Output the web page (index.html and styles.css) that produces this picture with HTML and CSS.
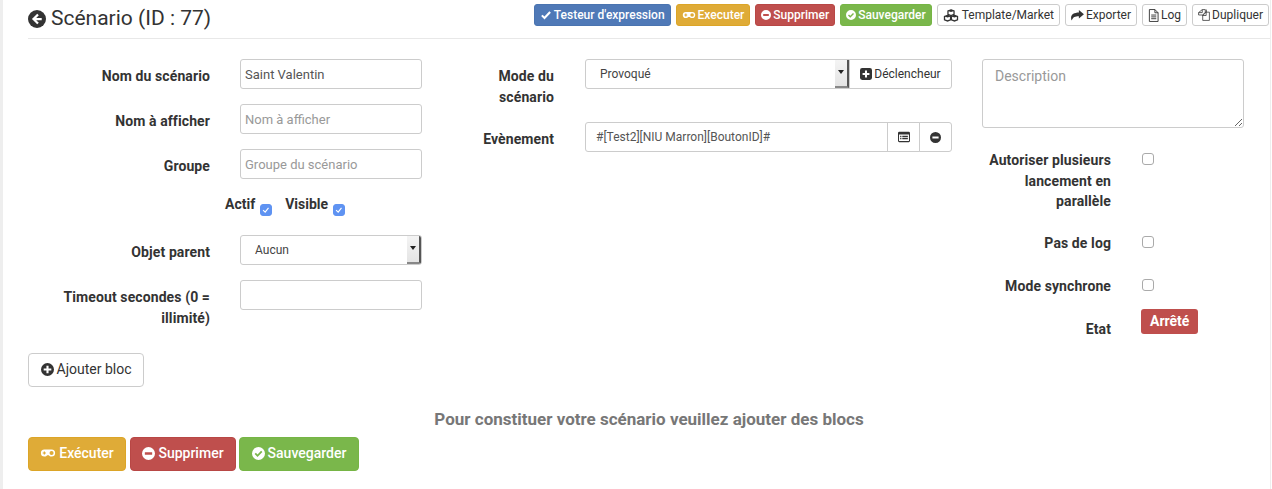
FILE: index.html
```html
<!DOCTYPE html>
<html lang="fr">
<head>
<meta charset="utf-8">
<title>Scénario</title>
<link rel="stylesheet" href="styles.css">
</head>
<body>
<svg class="defs" width="0" height="0" aria-hidden="true">
  <symbol id="i-back" viewBox="0 0 16 16"><circle cx="8" cy="8" r="8" fill="currentColor"/><path d="M8.200 3.300 3.500 8l4.700 4.700 1.400-1.400-2.300-2.300h4.900V7H7.300l2.300-2.300z" fill="#fff"/></symbol>
  <symbol id="i-check" viewBox="0 0 16 16"><path d="M2.500 8.500 6 12l7.500-8" fill="none" stroke="currentColor" stroke-width="2.800"/></symbol>
  <symbol id="i-game" viewBox="0 0 18 12"><path fill-rule="evenodd" d="M5 2h8a4 4 0 0 1 0 8c-1.500 0-2.500-.7-3-1.500H8C7.500 9.300 6.500 10 5 10A4 4 0 0 1 5 2zM4.200 4.200v1.100H3v1.400h1.200v1.100h1.400V6.700h1.100V5.300H5.600V4.200zM13 3.700a2.300 2.300 0 1 0 0 4.600 2.300 2.300 0 0 0 0-4.600z" fill="currentColor"/></symbol>
  <symbol id="i-minus" viewBox="0 0 16 16"><path fill-rule="evenodd" d="M8 0a8 8 0 1 1 0 16A8 8 0 0 1 8 0zM3.500 6.500v3h9v-3z" fill="currentColor"/></symbol>
  <symbol id="i-okc" viewBox="0 0 16 16"><path fill-rule="evenodd" d="M8 0a8 8 0 1 1 0 16A8 8 0 0 1 8 0zM6.800 12.300l6-6-1.600-1.600-4.400 4.400-2-2-1.600 1.600z" fill="currentColor"/></symbol>
  <symbol id="i-plus" viewBox="0 0 16 16"><path fill-rule="evenodd" d="M8 0a8 8 0 1 1 0 16A8 8 0 0 1 8 0zM6.700 3.300v3.400H3.300v2.600h3.400v3.400h2.600V9.300h3.400V6.700H9.300V3.300z" fill="currentColor"/></symbol>
  <symbol id="i-plussq" viewBox="0 0 14 14"><path fill-rule="evenodd" d="M2.500 0h9A2.500 2.500 0 0 1 14 2.500v9a2.500 2.500 0 0 1-2.500 2.500h-9A2.500 2.500 0 0 1 0 11.500v-9A2.500 2.500 0 0 1 2.500 0zM5.800 3v2.800H3v2.400h2.800V11h2.400V8.200H11V5.800H8.200V3z" fill="currentColor"/></symbol>
  <symbol id="i-cubes" viewBox="0 0 18 15"><g fill="none" stroke="currentColor" stroke-width="1.500"><path d="m9 1 3.500 1.300v3.900L9 7.500 5.500 6.200V2.300z"/><path d="m5 7.300 3.500 1.300v3.900L5 13.800l-3.500-1.300V8.600z"/><path d="m13 7.300 3.500 1.300v3.900L13 13.800l-3.500-1.300V8.600z"/></g><path d="m5.500 2.300 3.500 1.300 3.500-1.300L9 1zM1.500 8.600 5 9.900l3.500-1.300L5 7.300zM9.500 8.600l3.500 1.300 3.500-1.300L13 7.300z" fill="currentColor"/></symbol>
  <symbol id="i-share" viewBox="0 0 14 12"><path d="M8.500 0 14 4.700 8.500 9.400V6.700C4.500 6.700 2 7.400.6 11.500.2 10.500 0 9.500 0 8.500 0 4.800 3.600 2.900 8.500 2.800z" fill="currentColor"/></symbol>
  <symbol id="i-file" viewBox="0 0 12 14"><path d="M1.500.5h6l3.500 3.500v9.500H1.500zM7.500.5V4H11M3.500 6.500h5.500M3.500 8.500h5.500M3.500 10.500h5.500" fill="none" stroke="currentColor"/></symbol>
  <symbol id="i-copy" viewBox="0 0 14 14"><path d="M5 .7h3.500v3L5.500 7H.7V4.200zM5 .7v3.500H.7M8.500 3.700h1.300V.7M9.500 3.700H13.300V13.300H5.500V7M9.500 3.700 5.500 7.600h4z" fill="none" stroke="currentColor" stroke-width=".9"/></symbol>
  <symbol id="i-list" viewBox="0 0 14 12"><path fill-rule="evenodd" d="M1.500 0h11A1.500 1.500 0 0 1 14 1.500v9a1.500 1.500 0 0 1-1.500 1.500h-11A1.500 1.500 0 0 1 0 10.500v-9A1.500 1.500 0 0 1 1.500 0zM1.200 3.200v7.200c0 .2.200.4.400.4h10.800c.2 0 .4-.2.400-.4V3.200zM2.500 4.500V6H4V4.500zM5 4.500V6h6.500V4.500zM2.500 7V8.500H4V7zM5 7v1.500h6.500V7z" fill="currentColor"/></symbol>
</svg>

<main class="page">
  <header class="topbar">
    <h1 class="title"><svg class="ico ico-title"><use href="#i-back"/></svg>Scénario (ID : 77)</h1>
    <nav class="actions">
      <a class="btn btn-xs blue"><svg class="ico ico-check"><use href="#i-check"/></svg>Testeur d'expression</a>
      <a class="btn btn-xs amber"><svg class="ico ico-game"><use href="#i-game"/></svg>Executer</a>
      <a class="btn btn-xs red"><svg class="ico"><use href="#i-minus"/></svg>Supprimer</a>
      <a class="btn btn-xs green"><svg class="ico"><use href="#i-okc"/></svg>Sauvegarder</a>
      <a class="btn btn-xs plain"><svg class="ico ico-cubes"><use href="#i-cubes"/></svg>Template/Market</a>
      <a class="btn btn-xs plain"><svg class="ico ico-share"><use href="#i-share"/></svg>Exporter</a>
      <a class="btn btn-xs plain"><svg class="ico ico-file"><use href="#i-file"/></svg>Log</a>
      <a class="btn btn-xs plain"><svg class="ico ico-copy"><use href="#i-copy"/></svg>Dupliquer</a>
    </nav>
  </header>

  <section class="form">
    <div class="col col-left">
      <div class="row"><label class="lbl">Nom du scénario</label><input class="field" value="Saint Valentin"></div>
      <div class="row"><label class="lbl">Nom à afficher</label><input class="field" placeholder="Nom à afficher"></div>
      <div class="row"><label class="lbl">Groupe</label><input class="field" placeholder="Groupe du scénario"></div>
      <div class="flags">
        <label class="flag">Actif<input type="checkbox" class="check" checked></label>
        <label class="flag">Visible<input type="checkbox" class="check" checked></label>
      </div>
      <div class="row"><label class="lbl">Objet parent</label>
        <div class="select select-small"><span class="select-text">Aucun</span><span class="caret"></span></div>
      </div>
      <div class="row"><label class="lbl">Timeout secondes (0 = illimité)</label><input class="field"></div>
    </div>

    <div class="col col-mid">
      <div class="row row-mode"><label class="lbl lbl-mid">Mode du scénario</label>
        <div class="group">
          <div class="select select-grow"><span class="select-text">Provoqué</span><span class="caret"></span></div>
          <a class="addon addon-trigger"><svg class="ico"><use href="#i-plussq"/></svg>Déclencheur</a>
        </div>
      </div>
      <div class="row"><label class="lbl lbl-mid">Evènement</label>
        <div class="group">
          <input class="field field-join" value="#[Test2][NIU Marron][BoutonID]#">
          <a class="addon addon-mid"><svg class="ico"><use href="#i-list"/></svg></a>
          <a class="addon addon-end"><svg class="ico ico-small"><use href="#i-minus"/></svg></a>
        </div>
      </div>
    </div>

    <div class="col col-right">
      <textarea class="desc" placeholder="Description"></textarea>
      <div class="opt opt-first"><label class="lbl lbl-right">Autoriser plusieurs lancement en parallèle</label><input type="checkbox" class="check check-off"></div>
      <div class="opt opt-log"><label class="lbl lbl-right">Pas de log</label><input type="checkbox" class="check check-off"></div>
      <div class="opt opt-sync"><label class="lbl lbl-right">Mode synchrone</label><input type="checkbox" class="check check-off"></div>
      <div class="opt opt-state"><label class="lbl lbl-right lbl-state">Etat</label><span class="state">Arrêté</span></div>
    </div>
  </section>

  <a class="btn btn-add"><svg class="ico"><use href="#i-plus"/></svg>Ajouter bloc</a>
  <p class="hint">Pour constituer votre scénario veuillez ajouter des blocs</p>
  <footer class="bottom">
    <a class="btn btn-lg amber"><svg class="ico ico-wide"><use href="#i-game"/></svg>Exécuter</a>
    <a class="btn btn-lg red"><svg class="ico"><use href="#i-minus"/></svg>Supprimer</a>
    <a class="btn btn-lg green"><svg class="ico"><use href="#i-okc"/></svg>Sauvegarder</a>
  </footer>
</main>
</body>
</html>
```
FILE: styles.css
```css
* { box-sizing: border-box; }
html, body { margin: 0; padding: 0; height: 489px; overflow: hidden; background: #fff; }
body { font-family: Roboto, "Liberation Sans", sans-serif; color: #333; font-size: 14px; }
.defs { position: absolute; }
.page { height: 489px; margin-right: 1px; border-left: 3px solid #eee; border-right: 1px solid #eee; padding-left: 25px; }

.topbar { display: flex; justify-content: space-between; height: 39px; border-bottom: 1px solid #e8e8e8; }
.title { margin: 0; padding-top: 6px; font-size: 21px; line-height: 25px; font-weight: 400; color: #333; display: flex; align-items: center; height: 31px; }
.ico { width: 13px; height: 13px; flex: none; margin-right: 3px; fill: currentColor; }
.ico-title { width: 18px; height: 18px; margin-right: 5px; }
.ico-wide { width: 16px; height: 12px; }
.ico-small { width: 11px; height: 11px; margin-right: 0; }

.actions { display: flex; gap: 5px; padding-top: 4px; padding-right: 1px; }
.btn { display: inline-flex; align-items: center; justify-content: center; border: 1px solid #ccc; border-radius: 3px; text-decoration: none; white-space: nowrap; }
.btn-xs { height: 22px; padding: 0 5px; font-size: 12px; line-height: 18px; }
.btn-xs .ico { width: 10px; height: 10px; margin-right: 2px; }
.btn-xs .ico-check { width: 12px; height: 12px; margin-right: 2px; }
.btn-xs .ico-game { width: 14px; height: 10px; margin-right: 2px; }
.btn-xs .ico-cubes { width: 16px; height: 13px; margin-right: 3px; }
.btn-xs .ico-share { width: 13px; height: 11px; margin-right: 2px; }
.btn-xs .ico-file { width: 11px; height: 13px; margin-right: 2px; }
.btn-xs .ico-copy { width: 12px; height: 12px; margin-right: 2px; }
.blue { background: #4f79b7; border-color: #4a74b0; color: #fff; font-weight: 500; }
.amber { background: #dfab37; border-color: #dca527; color: #fff; font-weight: 500; }
.red { background: #bf4f4d; border-color: #b84745; color: #fff; font-weight: 500; }
.green { background: #7ab74b; border-color: #76b545; color: #fff; font-weight: 500; }
.plain { background: #fff; color: #333; }

.form { display: flex; height: 314px; padding-top: 20px; }
.col { display: flex; flex-direction: column; }
.col-left { width: 394px; gap: 15px; }
.col-mid { width: 482px; margin-left: 48px; gap: 15px; }
.col-right { width: 262px; margin-left: 30px; }

.row { display: flex; gap: 30px; align-items: flex-start; }
.lbl { display: block; text-align: right; font-weight: 700; font-size: 14px; line-height: 21px; color: #333; letter-spacing: .1px; }
.col-left .lbl { width: 182px; padding-top: 7px; }
.lbl-mid { flex: none; width: 84px; }
.col-mid .lbl { padding-top: 7px; }
.col-mid .row { gap: 31px; }
.row-mode { height: 48px; }

.field { width: 182px; height: 30px; border: 1px solid #ccc; border-radius: 3px; padding: 0 4px; font: 400 13px Roboto, sans-serif; color: #555; background: #fff; }
.field::placeholder { color: #999; opacity: 1; }
.group { display: flex; width: 367px; height: 30px; }
.field-join { flex: 1; min-width: 0; width: auto; border-radius: 3px 0 0 3px; padding-left: 10px; font-size: 12px; }

.flags { display: flex; gap: 13px; padding-left: 197px; height: 26px; }
.flag { font-weight: 700; line-height: 20px; display: flex; gap: 5px; }
.check { appearance: none; width: 12px; height: 12px; margin: 10px 0 0; border: 1px solid #aaa; border-radius: 3px; background: #fff; }
.check:checked { border-color: #5f93f2; background: #5f93f2 url("data:image/svg+xml,%3Csvg xmlns='http://www.w3.org/2000/svg' viewBox='0 0 12 12'%3E%3Cpath d='M2.500 6.200 5 8.500l4-5' fill='none' stroke='white' stroke-width='1.400'/%3E%3C/svg%3E") center / 100% no-repeat; }
.check-off { flex: none; margin: 0; }

.select { display: flex; align-items: stretch; height: 30px; border: 1px solid #ccc; border-radius: 3px; background: #fff; font-size: 12px; color: #444; overflow: hidden; }
.select-small { width: 182px; }
.select-grow { flex: 1; min-width: 0; border-radius: 3px 0 0 3px; }
.select-text { flex: 1; padding: 0 14px; line-height: 28px; }
.select-grow .select-text { line-height: 29px; }
.caret { position: relative; flex: none; width: 14px; background: linear-gradient(#f4f4f4, #e4e4e4); border-right: 2px solid #555; border-bottom: 2px solid #888; }
.caret::after { content: ""; position: absolute; left: 3px; top: 10px; border: 3.5px solid transparent; border-top: 4px solid #222; border-bottom: 0; }

.addon { display: flex; align-items: center; justify-content: center; height: 30px; border: 1px solid #ccc; margin-left: -1px; background: #fff; font-size: 12px; color: #333; }
.addon .ico { margin-right: 0; width: 12px; height: 12px; }
.addon .ico-small { width: 11px; height: 11px; }
.addon-trigger { width: 103px; border-radius: 0 3px 3px 0; gap: 2px; }
.addon-mid { width: 33px; }
.addon-end { width: 33px; border-radius: 0 3px 3px 0; }

.desc { display: block; width: 262px; height: 69px; border: 1px solid #ccc; border-radius: 3px; padding: 8px 12px; font: 400 14px Roboto, sans-serif; resize: vertical; }
.desc::placeholder { color: #999; opacity: 1; }
.opt { display: flex; gap: 31px; }
.lbl-right { flex: none; width: 129px; }
.opt-first { margin-top: 22px; height: 60px; }
.opt-first .lbl { line-height: 20.5px; }
.opt-first .check { margin-top: 3px; }
.opt-log { margin-top: 23px; }
.opt-log .check, .opt-sync .check { margin-top: 3px; }
.opt-sync { margin-top: 22px; }
.opt-state { margin-top: 13px; gap: 30px; }
.lbl-state { padding-top: 9px; }
.state { background: #bf4f4d; color: #fff; font-weight: 700; font-size: 14px; line-height: 24px; height: 25px; padding: 0 9px; border-radius: 3px; margin-top: -1px; }

.btn-add { width: 116px; height: 34px; background: #fff; color: #333; font-size: 14px; border-radius: 4px; padding-bottom: 2px; }
.btn-add .ico { margin-right: 3px; }
.hint { margin: 22px 0 0; text-align: center; font-weight: 700; font-size: 17px; line-height: 20px; color: #777; width: 1242px; }
.bottom { display: flex; gap: 3px; margin-top: 8px; }
.btn-lg { height: 34px; font-size: 14px; border-radius: 4px; padding: 0 12px 2px; }
.btn-lg.amber { width: 98px; }
.btn-lg.red { width: 106px; margin-left: 1px; }
.btn-lg.green { width: 120px; }
```
